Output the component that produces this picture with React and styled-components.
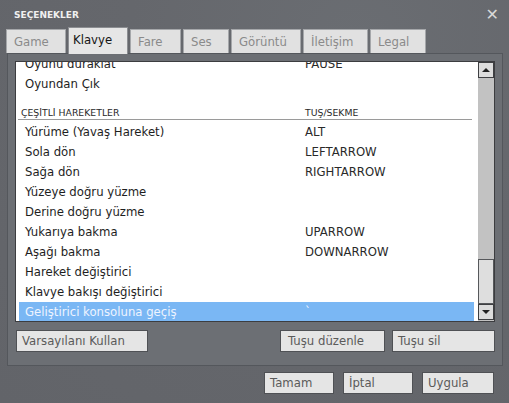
import React from "react";
import styled, { createGlobalStyle } from "styled-components";

const GlobalStyle = createGlobalStyle`
  html, body {
    margin: 0;
    padding: 0;
    background: #66686d;
    overflow: hidden;
  }
  * { box-sizing: border-box; }
`;

const Window = styled.div`
  width: 509px;
  height: 403px;
  display: flex;
  flex-direction: column;
  font-family: "DejaVu Sans", Verdana, sans-serif;
  background: radial-gradient(ellipse at 70% 10%, #6a6d72 0%, #65676c 45%, #626469 100%);
`;

const TitleBar = styled.div`
  height: 27px;
  display: flex;
  align-items: center;
  justify-content: space-between;
  padding: 2px 10px 0 14px;
`;

const Title = styled.span`
  font-size: 9px;
  font-weight: bold;
  color: #f0f0f0;
`;

const Close = styled.span`
  color: #d8d8d8;
  font-size: 16px;
  font-weight: bold;
  line-height: 1;
`;

const TabRow = styled.div`
  height: 26px;
  display: flex;
  align-items: flex-end;
  gap: 2px;
  padding-left: 6px;
  position: relative;
  z-index: 1;
`;

const Tab = styled.div`
  width: ${(p) => p.$w}px;
  height: ${(p) => (p.$active ? 27 : 24)}px;
  margin-bottom: ${(p) => (p.$active ? -1 : 0)}px;
  background: ${(p) => (p.$active ? "#e6e6e6" : "#e1e1e1")};
  border: 1px solid ${(p) => (p.$active ? "#8c8e92" : "#a5a7aa")};
  border-bottom: none;
  display: flex;
  align-items: center;
  padding-left: ${(p) => (p.$active ? 4 : 7)}px;
  padding-bottom: ${(p) => (p.$active ? 3 : 0)}px;
  font-size: 11.7px;
  color: ${(p) => (p.$active ? "#151515" : "#8a8a8a")};
`;

const Panel = styled.div`
  margin: 0 6px 0 7px;
  height: 313px;
  border: 1px solid #54575c;
  background: #6c6f74;
  padding: 7px 7px 0 7px;
  display: flex;
  flex-direction: column;
`;

const ListBox = styled.div`
  width: 480px;
  height: 261px;
  border: 1px solid #3c3d40;
  background: #fff;
  display: flex;
`;

const ListArea = styled.div`
  flex: 1;
  overflow: hidden;
`;

const ListInner = styled.div`
  margin-top: ${(p) => -p.$offset}px;
`;

const Row = styled.div`
  height: 20px;
  display: flex;
  align-items: center;
  margin: 0 4px 0 3px;
  padding-left: 6px;
  font-size: 11.7px;
  color: ${(p) => (p.$selected ? "#eef4ff" : "#1e1e1e")};
  background: ${(p) => (p.$selected ? "#7ab7f4" : "transparent")};
`;

const NameCell = styled.span`
  width: 280px;
  flex-shrink: 0;
`;

const KeyCell = styled.span`
  color: ${(p) => (p.$selected ? "#eef4ff" : "#2a2a2a")};
`;

const Header = styled.div`
  height: 26px;
  margin: 0 6px 2px 2px;
  padding: 0 0 1px 3px;
  display: flex;
  align-items: flex-end;
  border-bottom: 1px solid #9a9a9a;
  font-size: 9.3px;
  color: #2a2a2a;
`;

const HeaderName = styled.span`
  width: 284px;
  flex-shrink: 0;
`;

const Scrollbar = styled.div`
  width: 16px;
  display: flex;
  flex-direction: column;
  background: #c2c2c2;
  padding-bottom: 1px;
`;

const ScrollButton = styled.div`
  height: 16px;
  background: #dcdcdc;
  border: 1px solid #3e3f42;
  display: flex;
  align-items: center;
  justify-content: center;
`;

const Track = styled.div`
  flex: 1;
  display: flex;
  flex-direction: column;
  justify-content: flex-end;
`;

const Thumb = styled.div`
  height: 45px;
  background: #dedede;
  border: 1px solid #56585b;
`;

const Arrow = styled.span`
  width: 0;
  height: 0;
  border-left: 4px solid transparent;
  border-right: 4px solid transparent;
  ${(p) =>
    p.$up
      ? "border-bottom: 4px solid #222;"
      : "border-top: 4px solid #222;"}
`;

const ButtonRow = styled.div`
  display: flex;
  gap: 7px;
  margin-top: 8px;
  padding-left: 1px;
`;

const Spacer = styled.div`
  flex: 1;
`;

const Button = styled.div`
  width: ${(p) => p.$w}px;
  height: 22px;
  background: #e5e5e5;
  border: 1px solid #4f5155;
  display: flex;
  align-items: center;
  padding-left: ${(p) => p.$pad || 5}px;
  font-size: 11.7px;
  color: #5a5a5a;
`;

const FooterRow = styled.div`
  display: flex;
  justify-content: flex-end;
  gap: 9px;
  padding-right: 15px;
  margin-top: 6px;
`;

const tabs = [
  { label: "Game", w: 60 },
  { label: "Klavye", w: 60, active: true },
  { label: "Fare", w: 51 },
  { label: "Ses", w: 46 },
  { label: "Görüntü", w: 70 },
  { label: "İletişim", w: 65 },
  { label: "Legal", w: 56 },
];

const topRows = [
  ["Oyunu duraklat", "PAUSE"],
  ["Oyundan Çık", ""],
];

const moveRows = [
  ["Yürüme (Yavaş Hareket)", "ALT"],
  ["Sola dön", "LEFTARROW"],
  ["Sağa dön", "RIGHTARROW"],
  ["Yüzeye doğru yüzme", ""],
  ["Derine doğru yüzme", ""],
  ["Yukarıya bakma", "UPARROW"],
  ["Aşağı bakma", "DOWNARROW"],
  ["Hareket değiştirici", ""],
  ["Klavye bakışı değiştirici", ""],
  ["Geliştirici konsoluna geçiş", "`", true],
];

export default function App() {
  return (
    <>
      <GlobalStyle />
      <Window>
        <TitleBar>
          <Title>SEÇENEKLER</Title>
          <Close>✕</Close>
        </TitleBar>
        <TabRow>
          {tabs.map((t) => (
            <Tab key={t.label} $w={t.w} $active={t.active}>
              {t.label}
            </Tab>
          ))}
        </TabRow>
        <Panel>
          <ListBox>
            <ListArea>
              <ListInner $offset={8}>
                {topRows.map(([name, key]) => (
                  <Row key={name}>
                    <NameCell>{name}</NameCell>
                    <KeyCell>{key}</KeyCell>
                  </Row>
                ))}
                <Header>
                  <HeaderName>ÇEŞİTLİ HAREKETLER</HeaderName>
                  <span>TUŞ/SEKME</span>
                </Header>
                {moveRows.map(([name, key, sel]) => (
                  <Row key={name} $selected={sel}>
                    <NameCell>{name}</NameCell>
                    <KeyCell $selected={sel}>{key}</KeyCell>
                  </Row>
                ))}
              </ListInner>
            </ListArea>
            <Scrollbar>
              <ScrollButton>
                <Arrow $up />
              </ScrollButton>
              <Track>
                <Thumb />
              </Track>
              <ScrollButton>
                <Arrow />
              </ScrollButton>
            </Scrollbar>
          </ListBox>
          <ButtonRow>
            <Button $w={132}>Varsayılanı Kullan</Button>
            <Spacer />
            <Button $w={105} $pad={7}>Tuşu düzenle</Button>
            <Button $w={103}>Tuşu sil</Button>
          </ButtonRow>
        </Panel>
        <FooterRow>
          <Button $w={70}>Tamam</Button>
          <Button $w={70}>İptal</Button>
          <Button $w={72}>Uygula</Button>
        </FooterRow>
      </Window>
    </>
  );
}
